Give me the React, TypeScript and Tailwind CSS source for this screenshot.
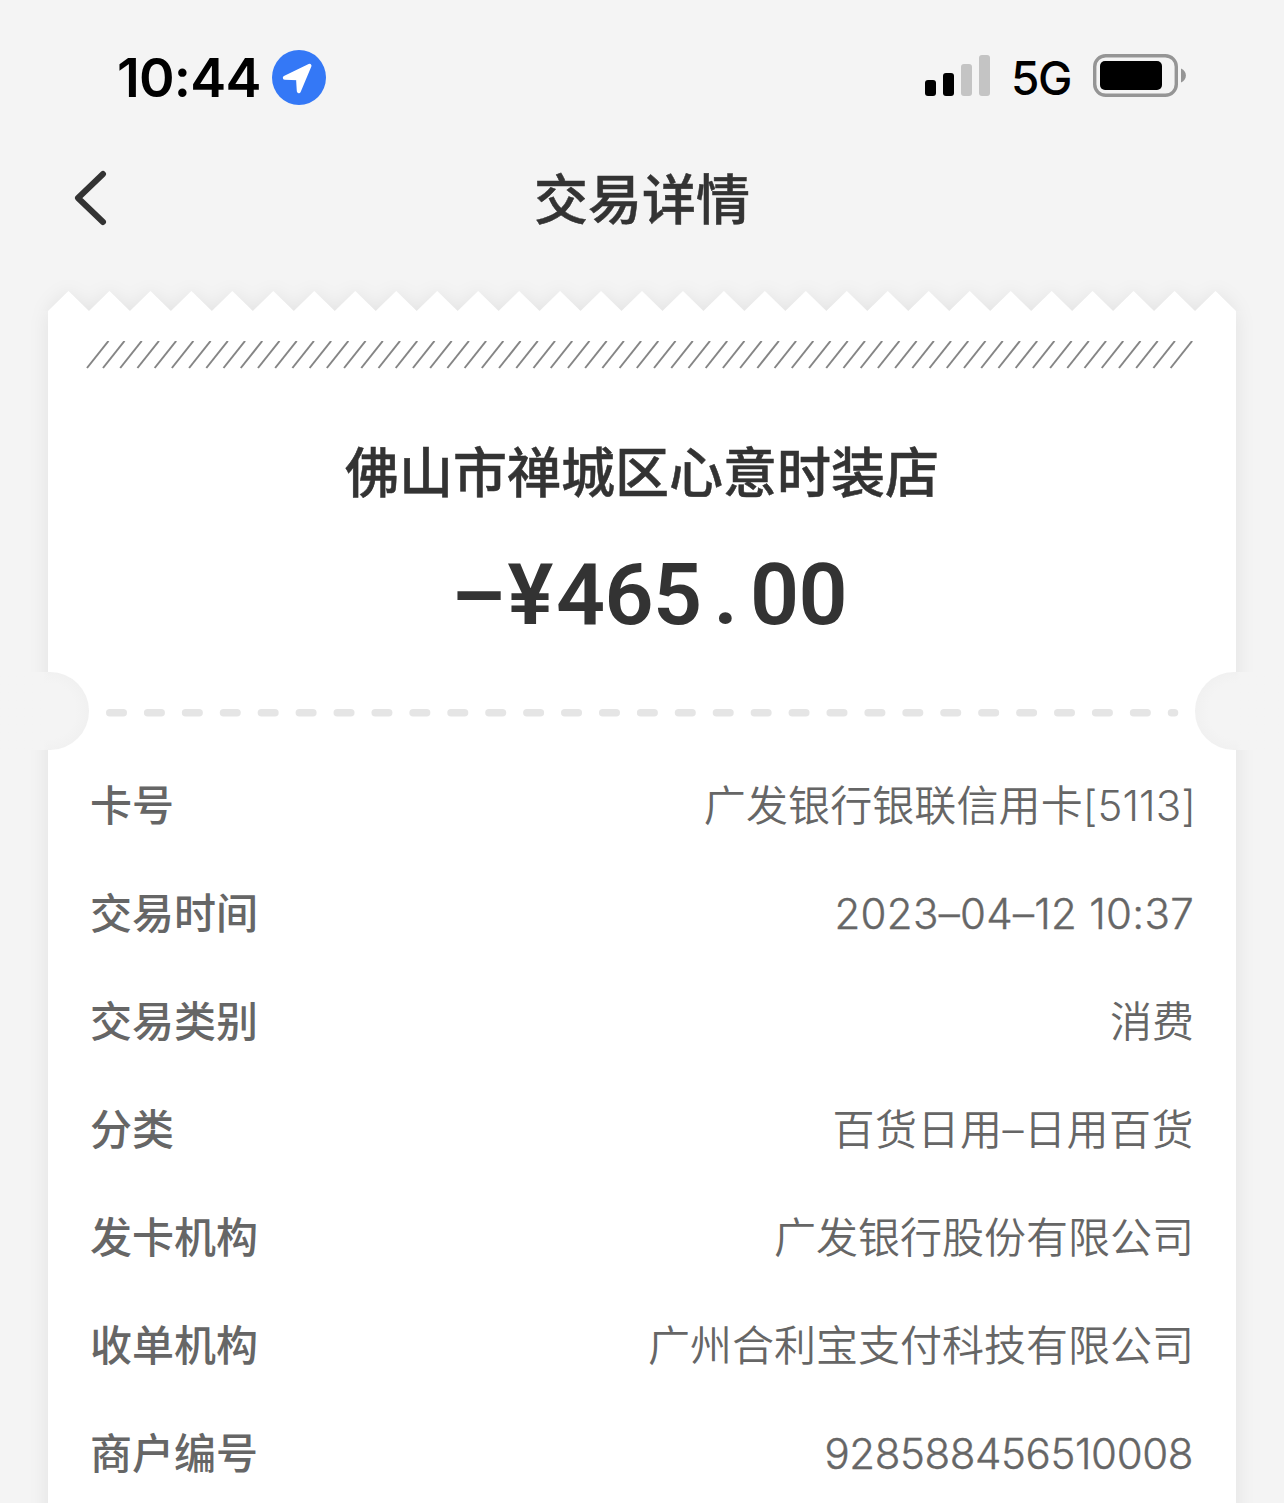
import { clsx } from "clsx";

const details = [
  { label: "卡号", value: "广发银行银联信用卡[5113]", spacing: "-mr-[3px] tracking-[0.1px]" },
  { label: "交易时间", value: "2023–04–12 10:37", spacing: "-mr-[1px] tracking-[0.3px] [-webkit-text-stroke:0.4px]" },
  { label: "交易类别", value: "消费", spacing: "-mr-[1px]" },
  { label: "分类", value: "百货日用–日用百货", spacing: "-mr-[1px] tracking-[0.5px]" },
  { label: "发卡机构", value: "广发银行股份有限公司", spacing: "-mr-[1px]" },
  { label: "收单机构", value: "广州合利宝支付科技有限公司", spacing: "-mr-[1px]" },
  { label: "商户编号", value: "928588456510008", spacing: "tracking-[-0.4px] [-webkit-text-stroke:0.4px]" },
];

const TEETH = 29;
const amount = ["4", "6", "5", ".", "0", "0"];

const zigzag = Array.from(
  { length: TEETH },
  (_, i) => `L${i * 41 + 20.5} 0 L${(i + 1) * 41} 20`
).join(" ");

const StatusBar = () => {
  return (
    <div className="flex h-[152px] items-start justify-between pl-[117px] pr-[97px] pt-[50px]">
      <div className="flex items-center">
        <span className="w-[155px] text-[54px] font-semibold leading-[54px] tracking-[-0.8px] text-black">
          10:44
        </span>
        <svg width="54" height="55" viewBox="0 0 54 55">
          <ellipse cx="27" cy="27.5" rx="27" ry="27.5" fill="#3478f6" />
          <path
            d="M12.8 27.8 L37.5 15.8 L26.8 41.2 L26 28.2 Z"
            fill="white"
            stroke="white"
            strokeWidth="4"
            strokeLinejoin="round"
          />
        </svg>
      </div>
      <div className="flex items-start">
        {/* Signal bars */}
        <div className="mt-[5px] flex h-[41px] items-end gap-[7px]">
          <div className="h-4 w-[11px] rounded-[3px] bg-black" />
          <div className="h-[23px] w-[11px] rounded-[3px] bg-black" />
          <div className="h-8 w-[11px] rounded-[3px] bg-[#c4c4c4]" />
          <div className="h-[41px] w-[11px] rounded-[3px] bg-[#c4c4c4]" />
        </div>
        <span className="ml-[21px] mt-1 w-[82px] text-[46px] font-medium leading-[48px] tracking-[-1.5px] text-black">
          5G
        </span>
        {/* Battery */}
        <svg className="mt-1" width="94" height="43" viewBox="0 0 94 43">
          <rect x="1.7" y="1.7" width="81.6" height="39.6" rx="11" fill="none" stroke="#959595" strokeWidth="3.4" />
          <rect x="7" y="7" width="62" height="29" rx="5" fill="black" />
          <path d="M88 14.5 C94.5 17 94.5 26 88 28.5 Z" fill="#959595" />
        </svg>
      </div>
    </div>
  );
};

const Header = () => {
  return (
    <div className="grid h-[139px] grid-cols-[120px_1fr_120px] items-start">
      <svg className="ml-[74px] mt-[18px]" width="34" height="56" viewBox="0 0 34 56">
        <path
          d="M29 4 L4 28 L29 52"
          fill="none"
          stroke="#333333"
          strokeWidth="6"
          strokeLinecap="round"
          strokeLinejoin="round"
        />
      </svg>
      <h1 className="mt-[17px] text-center text-[54px] font-medium leading-[64px] text-[#333333] [-webkit-text-stroke:0.5px]">
        交易详情
      </h1>
    </div>
  );
};

const Hatching = () => {
  return (
    <svg className="ml-[38px]" width="1110" height="28" viewBox="0 0 1110 28">
      {Array.from({ length: 64 }, (_, i) => {
        const x = i === 0 ? 1 : 17 + (i - 1) * 17.22;
        return (
          <line key={i} x1={x} y1="27" x2={x + 21.5} y2="0" stroke="#858585" strokeWidth="2" />
        );
      })}
    </svg>
  );
};

const Divider = () => {
  return (
    <div className="relative h-[78px]">
      <div className="absolute -left-12 top-0 h-full w-[89px] rounded-r-full bg-[radial-gradient(circle_at_48px_39px,#f4f4f4_45%,#ebebeb_100%)] bg-[#f4f4f4]" />
      <div className="absolute -right-12 top-0 h-full w-[89px] rounded-l-full bg-[radial-gradient(circle_at_41px_39px,#f4f4f4_45%,#ebebeb_100%)] bg-[#f4f4f4]" />
      <div className="absolute -left-12 top-0 h-full w-12 bg-linear-to-r from-[#f4f4f4] from-90% to-transparent" />
      <div className="absolute -right-12 top-0 h-full w-12 bg-linear-to-l from-[#f4f4f4] from-90% to-transparent" />
      <svg className="ml-[58px]" width="1073" height="78" viewBox="0 0 1073 78">
        {Array.from({ length: 29 }, (_, i) => (
          <rect key={i} x={i * 37.92} y="37" width={i === 28 ? 10.5 : 21} height="7.5" rx="3.75" fill="#e5e5e5" />
        ))}
      </svg>
    </div>
  );
};

export default function App() {
  return (
    <div className="h-[1503px] w-[1284px] overflow-hidden bg-[#f4f4f4] font-['Inter','Noto_Sans_CJK_SC',sans-serif]">
      <StatusBar />
      <Header />

      <div className="mx-12">
        {/* Torn edge, the shadow is cut where the paper starts */}
        <div className="h-5 [clip-path:inset(-30px_-40px_0_-40px)]">
          <svg
            className="block overflow-visible drop-shadow-[0_0_9px_rgba(0,0,0,0.07)]"
            width="1188"
            height="60"
            viewBox="0 0 1189 60"
            preserveAspectRatio="none"
          >
            <path d={`M0 20 ${zigzag} V60 H0 Z`} fill="white" />
          </svg>
        </div>
        <div className="h-[1300px] bg-white pt-[30px] shadow-[0_0_20px_rgba(0,0,0,0.08)] [clip-path:inset(0_-48px_0_-48px)]">
          <Hatching />
          <h2 className="mt-[65px] text-center text-[54px] font-medium leading-[80px] text-[#333333] [-webkit-text-stroke:0.5px]">
            佛山市禅城区心意时装店
          </h2>
          <div className="mt-[31px] flex h-[100px] pl-[403px] font-['Roboto',sans-serif] text-[86px] font-semibold leading-[100px] text-[#333333]">
            <span className="mr-1 w-[50px] pt-[2px] text-center">–</span>
            <span className="w-[51px] text-center">¥</span>
            {amount.map((char, index) => (
              <span key={index} className="w-[48.5px] text-center">
                {char}
              </span>
            ))}
          </div>
          <div className="mt-[27px]">
            <Divider />
          </div>
          <dl className="pl-[42px] pr-[43px] pt-[2px]">
            {details.map(({ label, value, spacing }) => (
              <div key={label} className="flex h-[108px] items-center justify-between text-[42px] leading-[60px] text-[#666666]">
                <dt className="font-medium">{label}</dt>
                <dd className={clsx("whitespace-nowrap font-[350]", spacing)}>{value}</dd>
              </div>
            ))}
          </dl>
        </div>
      </div>
    </div>
  );
}
